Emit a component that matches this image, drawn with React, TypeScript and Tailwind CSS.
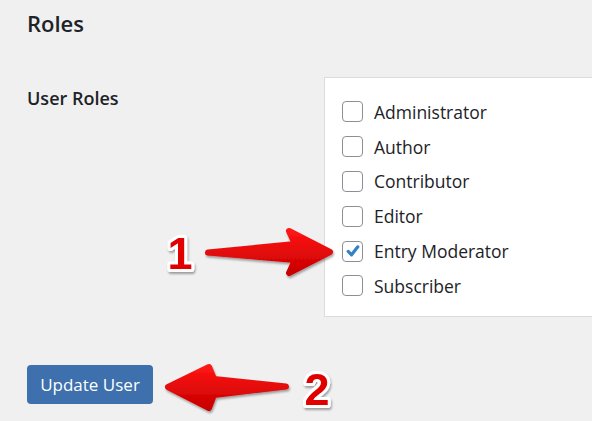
import React from 'react';

const roles = [
  { name: 'Administrator', checked: false },
  { name: 'Author', checked: false },
  { name: 'Contributor', checked: false },
  { name: 'Editor', checked: false },
  { name: 'Entry Moderator', checked: true },
  { name: 'Subscriber', checked: false },
];

const Checkbox = ({ checked }: { checked: boolean }) => (
  <span className="flex h-[21px] w-[21px] shrink-0 items-center justify-center rounded-[4px] border border-[#8c8f94] bg-white">
    {checked && (
      <svg width="16" height="16" viewBox="0 0 20 20">
        <path d="M4 10.5 L8.2 14.8 L16 4.8" fill="none" stroke="#3582c4" strokeWidth="4" strokeLinecap="round" strokeLinejoin="round" />
      </svg>
    )}
  </span>
);

const Annotations = () => (
  <svg className="pointer-events-none absolute inset-0" width="592" height="421" viewBox="0 0 592 421">
    <defs>
      <linearGradient id="red1" x1="0" y1="0" x2="0" y2="1">
        <stop offset="0" stopColor="#ff1414" />
        <stop offset="1" stopColor="#c80000" />
      </linearGradient>
      <filter id="shadow" x="-20%" y="-20%" width="140%" height="160%">
        <feDropShadow dx="1" dy="2" stdDeviation="1.2" floodColor="#000" floodOpacity="0.35" />
      </filter>
    </defs>
    <g filter="url(#shadow)">
      <path
        d="M208 252.5 L295 244 L289 231 L330 252 L289 273 L295 260 Z"
        fill="url(#red1)"
        stroke="url(#red1)"
        strokeWidth="6"
        strokeLinejoin="round"
      />
      <path
        d="M286 386.5 L214 379 L209 367 L168 387 L209 408 L214 395 Z"
        fill="url(#red1)"
        stroke="url(#red1)"
        strokeWidth="6"
        strokeLinejoin="round"
      />
      <text
        x="180"
        y="269"
        textAnchor="middle"
        fontFamily="'Liberation Sans', Arial, sans-serif"
        fontWeight="700"
        fontSize="45"
        fill="#e00000"
        stroke="#ffffff"
        strokeWidth="6"
        strokeLinejoin="round"
        style={{ paintOrder: 'stroke' }}
      >
        1
      </text>
      <text
        x="317"
        y="405"
        textAnchor="middle"
        fontFamily="'Liberation Sans', Arial, sans-serif"
        fontWeight="700"
        fontSize="45"
        fill="#e00000"
        stroke="#ffffff"
        strokeWidth="6"
        strokeLinejoin="round"
        style={{ paintOrder: 'stroke' }}
      >
        2
      </text>
    </g>
  </svg>
);

export default function App() {
  return (
    <div className="relative h-[421px] w-[592px] overflow-hidden bg-[#f0f0f1] pl-[27px] font-['Open_Sans',sans-serif] text-[#1d2327]">
      <h2 className="mt-[9px] text-[22px] font-semibold leading-[28px]">Roles</h2>

      <div className="mt-[40px] flex">
        <div className="w-[297px] shrink-0 pt-[9px] text-[18px] font-semibold leading-[24px]">User Roles</div>
        <div className="w-[300px] shrink-0 border border-[#dcdcde] bg-white pb-[13px] pl-[17px] pt-[16.5px]">
          {roles.map((role) => (
            <label key={role.name} className="flex h-[34.8px] items-center gap-[11px] text-[17.5px]">
              <Checkbox checked={role.checked} />
              <span>{role.name}</span>
            </label>
          ))}
        </div>
      </div>

      <button className="mt-[48px] flex h-[39px] w-[126px] items-center justify-center rounded-[4px] bg-[#3d70ad] text-[17px] text-white">
        Update User
      </button>

      <Annotations />
    </div>
  );
}
